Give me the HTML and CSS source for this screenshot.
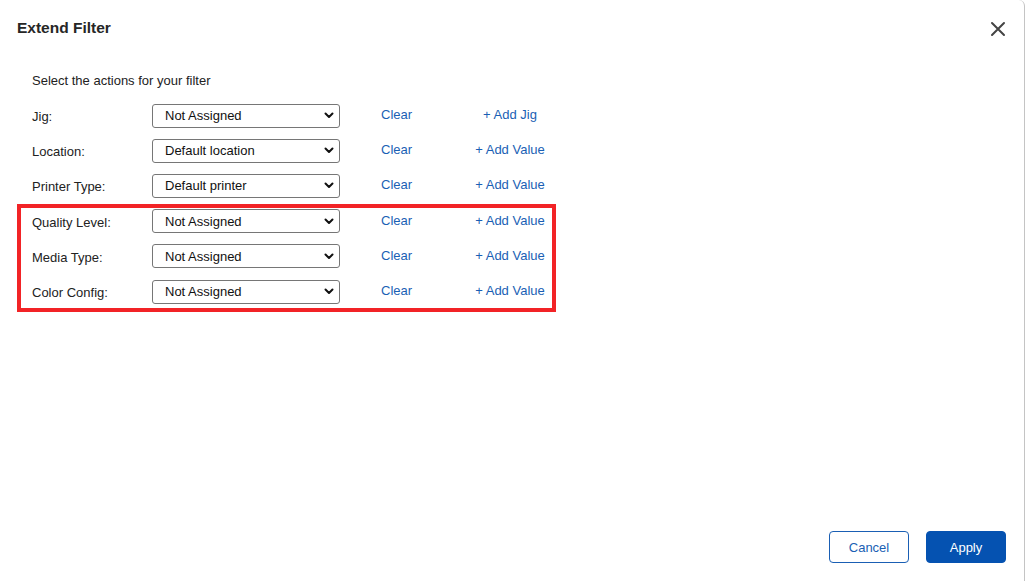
FILE: index.html
```html
<!DOCTYPE html>
<html lang="en">
<head>
<meta charset="utf-8">
<title>Extend Filter</title>
<link rel="stylesheet" href="styles.css">
</head>
<body>
<div class="dialog">
  <header class="dialog-header">
    <h1 class="dialog-title">Extend Filter</h1>
    <button class="close-btn" aria-label="Close">
      <svg width="16" height="16" viewBox="0 0 16 16"><path d="M2 2 L14 14 M14 2 L2 14" stroke="#444" stroke-width="2" stroke-linecap="round" fill="none"/></svg>
    </button>
  </header>
  <p class="intro">Select the actions for your filter</p>
  <div class="rows">
    <div class="row">
      <label class="row-label">Jig:</label>
      <select class="row-select"><option>Not Assigned</option></select>
      <a class="link clear">Clear</a>
      <a class="link add">+ Add Jig</a>
    </div>
    <div class="row">
      <label class="row-label">Location:</label>
      <select class="row-select"><option>Default location</option></select>
      <a class="link clear">Clear</a>
      <a class="link add">+ Add Value</a>
    </div>
    <div class="row">
      <label class="row-label">Printer Type:</label>
      <select class="row-select"><option>Default printer</option></select>
      <a class="link clear">Clear</a>
      <a class="link add">+ Add Value</a>
    </div>
    <div class="row">
      <label class="row-label">Quality Level:</label>
      <select class="row-select"><option>Not Assigned</option></select>
      <a class="link clear">Clear</a>
      <a class="link add">+ Add Value</a>
    </div>
    <div class="row">
      <label class="row-label">Media Type:</label>
      <select class="row-select"><option>Not Assigned</option></select>
      <a class="link clear">Clear</a>
      <a class="link add">+ Add Value</a>
    </div>
    <div class="row">
      <label class="row-label">Color Config:</label>
      <select class="row-select"><option>Not Assigned</option></select>
      <a class="link clear">Clear</a>
      <a class="link add">+ Add Value</a>
    </div>
    <div class="highlight"></div>
  </div>
  <footer class="dialog-footer">
    <button class="btn btn-secondary">Cancel</button>
    <button class="btn btn-primary">Apply</button>
  </footer>
</div>
</body>
</html>
```
FILE: styles.css
```css
* { box-sizing: border-box; }
html, body { margin: 0; padding: 0; background: #fff; }
body {
  font-family: "Liberation Sans", Arial, sans-serif;
  font-size: 13px;
  color: #222;
}
.dialog {
  width: 1025px;
  height: 581px;
  display: flex;
  flex-direction: column;
  border-right: 1px solid #c4c4c4;
  border-top-right-radius: 6px;
  background: #fff;
}
.dialog-header {
  display: flex;
  align-items: center;
  justify-content: space-between;
  padding: 17px 18px 0 17px;
  height: 38px;
}
.dialog-title {
  margin: 0;
  font-size: 15.5px;
  font-weight: bold;
  line-height: 20px;
  color: #262626;
}
.close-btn {
  border: 0;
  background: none;
  padding: 0;
  width: 16px;
  height: 16px;
  margin-top: 3px;
  cursor: pointer;
}
.close-btn svg { display: block; }
.intro {
  margin: 35px 0 9px 32px;
  line-height: 16px;
}
.rows {
  position: relative;
  margin-left: 32px;
}
.row {
  display: flex;
  align-items: center;
  height: 35.2px;
}
.row-label {
  width: 120px;
  padding-top: 2px;
}
.row-select {
  appearance: none;
  -webkit-appearance: none;
  width: 188px;
  height: 24px;
  border: 1px solid #767676;
  border-radius: 3px;
  padding: 0 24px 0 12px;
  font-family: "Liberation Sans", Arial, sans-serif;
  font-size: 13px;
  color: #111;
  background: #fff url("data:image/svg+xml;utf8,<svg xmlns='http://www.w3.org/2000/svg' width='10' height='7' viewBox='0 0 10 7'><path d='M1.5 1.5 L5 5 L8.5 1.5' stroke='%23111' stroke-width='2' fill='none' stroke-linecap='round' stroke-linejoin='round'/></svg>") no-repeat right 5px center;
}
.link {
  color: #1a5fb4;
  cursor: pointer;
  margin-top: -2px;
}
.clear {
  margin-left: 41px;
  width: 79px;
}
.add {
  width: 100px;
  text-align: center;
}
.highlight {
  position: absolute;
  left: -15px;
  top: 106px;
  width: 539px;
  height: 108px;
  border: 4px solid #f22326;
  pointer-events: none;
}
.dialog-footer {
  margin-top: auto;
  display: flex;
  justify-content: flex-end;
  gap: 17px;
  padding: 0 18px 18px 0;
}
.btn {
  width: 80px;
  height: 32px;
  border-radius: 4px;
  font-family: "Liberation Sans", Arial, sans-serif;
  font-size: 13px;
  cursor: pointer;
}
.btn-secondary {
  background: #fff;
  border: 1px solid #1a5fb4;
  color: #1a5fb4;
}
.btn-primary {
  background: #0552b1;
  border: 1px solid #0552b1;
  color: #fff;
}
```
